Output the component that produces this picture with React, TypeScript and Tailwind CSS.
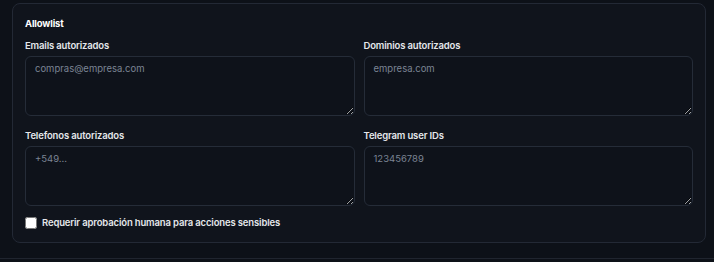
import React from 'react';

const fields = [
  { label: 'Emails autorizados', placeholder: 'compras@empresa.com' },
  { label: 'Dominios autorizados', placeholder: 'empresa.com' },
  { label: 'Telefonos autorizados', placeholder: '+549...' },
  { label: 'Telegram user IDs', placeholder: '123456789' },
];

const App = () => {
  return (
    <div className="min-h-screen bg-[#0d1118] font-['Inter',sans-serif]">
      <div className="pl-3 pr-2 pt-[3px] pb-[15px] border-b border-[#20252f]">
        <section className="rounded-lg border border-[#232935] bg-[#10141c] p-3">
          <h3 className="text-[9.5px] leading-[16px] font-bold tracking-[-0.15px] text-white mb-1.5">Allowlist</h3>

          <div className="grid grid-cols-2 gap-x-[9px] gap-y-3">
            {fields.map((field, index) => (
              <label key={index} className="flex flex-col">
                <span className="text-[9.5px] leading-[16px] font-semibold tracking-[-0.15px] text-[#e5e7eb] mb-[2px]">
                  {field.label}
                </span>
                <textarea
                  placeholder={field.placeholder}
                  className="h-[60px] w-full rounded-md border border-[#252c38] bg-[#0e121a] px-[9px] py-[5px] text-[9.5px] leading-[14px] text-[#e5e7eb] placeholder:text-[#7b8494] [color-scheme:dark] outline-none"
                />
              </label>
            ))}
          </div>

          {/* Approval toggle */}
          <label className="mt-[10px] flex items-center gap-[5px] h-[14px]">
            <input type="checkbox" className="m-0 h-[12px] w-[12px] [color-scheme:light]" />
            <span className="text-[9.5px] leading-[14px] font-semibold tracking-[-0.15px] text-[#e5e7eb]">
              Requerir aprobación humana para acciones sensibles
            </span>
          </label>
        </section>
      </div>
    </div>
  );
};

export default App;
